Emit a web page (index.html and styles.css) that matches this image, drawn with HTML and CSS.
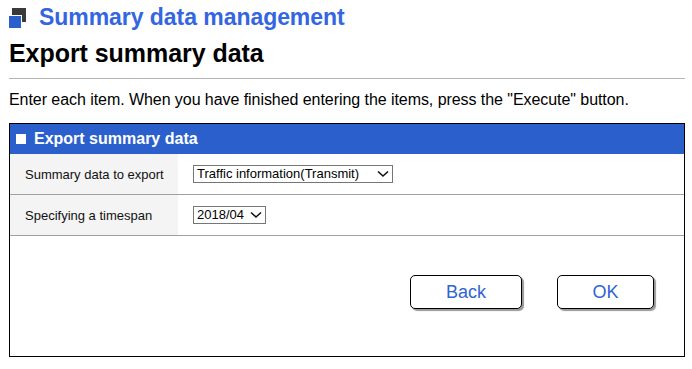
FILE: index.html
```html
<!DOCTYPE html>
<html>
<head>
<meta charset="utf-8">
<link rel="stylesheet" href="styles.css">
</head>
<body>
<div class="page">
  <div class="app-title">
    <span class="logo"><span class="sq back"></span><span class="sq front"></span></span>
    <span class="app-name">Summary data management</span>
  </div>
  <h1 class="page-title">Export summary data</h1>
  <hr class="rule">
  <p class="intro">Enter each item. When you have finished entering the items, press the "Execute" button.</p>
  <div class="panel">
    <div class="panel-head"><span class="bullet"></span>Export summary data</div>
    <div class="row">
      <div class="label">Summary data to export</div>
      <div class="field">
        <div class="select wide"><span>Traffic information(Transmit)</span><svg viewBox="0 0 12 8" width="12" height="8"><path d="M1 1.5 L6 6 L11 1.5" fill="none" stroke="#111" stroke-width="1.6"/></svg></div>
      </div>
    </div>
    <div class="row">
      <div class="label">Specifying a timespan</div>
      <div class="field">
        <div class="select"><span>2018/04</span><svg viewBox="0 0 12 8" width="12" height="8"><path d="M1 1.5 L6 6 L11 1.5" fill="none" stroke="#111" stroke-width="1.6"/></svg></div>
      </div>
    </div>
    <div class="actions">
      <button class="btn back-btn">Back</button>
      <button class="btn ok-btn">OK</button>
    </div>
  </div>
</div>
</body>
</html>
```
FILE: styles.css
```css
* { box-sizing: border-box; }
html, body { margin: 0; padding: 0; background: #fff; }
body { font-family: "Liberation Sans", Arial, sans-serif; color: #000; }
.page { padding: 0 7px 0 9px; }
.app-title { display: flex; align-items: center; height: 34px; padding-top: 1px; }
.logo { position: relative; width: 18px; height: 21px; margin-right: 12px; margin-top: 2px; }
.sq { position: absolute; display: block; }
.sq.back { left: 3px; top: 0; width: 14px; height: 14px; background: #3a3a3a; }
.sq.front { left: 0; top: 8px; width: 12px; height: 12px; background: #2b5fcc; outline: 1px solid #fff; }
.app-name { font-size: 23px; font-weight: bold; color: #3366e0; letter-spacing: -0.05px; }
.page-title { margin: 0; font-size: 25px; font-weight: bold; height: 36px; line-height: 38px; letter-spacing: -0.05px; }
.rule { margin: 8px 0 0; border: 0; border-top: 1px solid #b4b4b4; height: 0; width: 676px; }
.intro { margin: 11px 0 0; font-size: 16px; line-height: 20px; height: 20px; letter-spacing: -0.06px; }
.panel { margin-top: 13px; width: 676px; height: 234px; border: 1px solid #000; display: flex; flex-direction: column; }
.panel-head { background: #2b5fcc; color: #fff; font-weight: bold; font-size: 16px; height: 30px; display: flex; align-items: center; padding-left: 6px; }
.bullet { width: 10px; height: 10px; background: #fff; margin-right: 8px; }
.row { display: flex; height: 41px; border-bottom: 1px solid #a0a0a0; }
.label { width: 168px; background: #f4f4f4; font-size: 13px; padding-left: 15px; display: flex; align-items: center; color: #111; }
.field { flex: 1; display: flex; align-items: center; padding-left: 15px; }
.select { display: flex; align-items: center; justify-content: space-between; height: 18px; border: 1px solid #767676; padding: 0 3px 0 3px; font-size: 13px; color: #000; background: #fff; gap: 6px; }
.select.wide { width: 200px; }
.select span { line-height: 16px; }
.actions { flex: 1; display: flex; justify-content: flex-end; align-items: flex-start; padding-top: 39px; padding-right: 30px; gap: 35px; }
.btn { font-family: "Liberation Sans", Arial, sans-serif; font-size: 18px; color: #2f63d6; background: #fff; border: 1px solid #000; border-radius: 5px; height: 34px; box-shadow: 2px 2px 1px #9a9a9a; padding: 0; }
.back-btn { width: 112px; }
.ok-btn { width: 97px; }
```
